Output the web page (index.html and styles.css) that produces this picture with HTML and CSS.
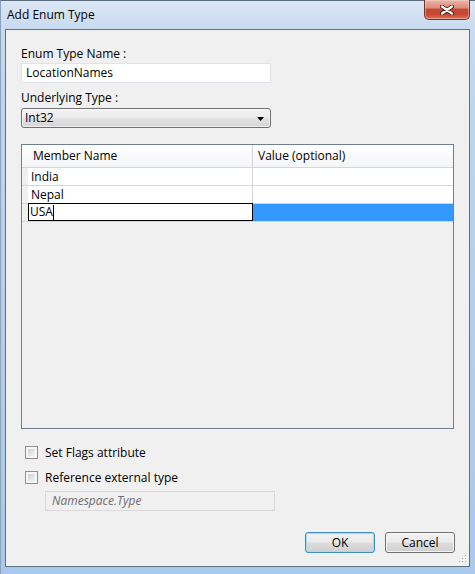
FILE: index.html
```html
<!DOCTYPE html>
<html>
<head>
<meta charset="utf-8">
<title>Add Enum Type</title>
<link rel="stylesheet" href="styles.css">
</head>
<body>
<div class="window">
  <div class="titlebar">
    <span class="title">Add Enum Type</span>
    <div class="close">
      <svg width="14" height="10" viewBox="0 0 14 10">
        <path d="M2 1.5 L12 8.5 M12 1.5 L2 8.5" stroke="#4a1e16" stroke-width="4" stroke-linecap="round" fill="none"/>
        <path d="M2 1.5 L12 8.5 M12 1.5 L2 8.5" stroke="#ffffff" stroke-width="2.2" stroke-linecap="round" fill="none"/>
      </svg>
    </div>
  </div>
  <div class="client">
    <div class="label">Enum Type Name :</div>
    <div class="textbox">LocationNames</div>
    <div class="label label-second">Underlying Type :</div>
    <div class="combo">
      <span>Int32</span>
      <svg class="arrow" width="7" height="4" viewBox="0 0 7 4"><path d="M0 0 H7 L3.5 4 Z" fill="#000"/></svg>
    </div>
    <div class="grid">
      <div class="row header">
        <div class="rowhead"></div>
        <div class="cell c1">Member Name</div>
        <div class="cell c2">Value (optional)</div>
      </div>
      <div class="row">
        <div class="rowhead"></div>
        <div class="cell c1">India</div>
        <div class="cell c2"></div>
      </div>
      <div class="row">
        <div class="rowhead"></div>
        <div class="cell c1">Nepal</div>
        <div class="cell c2"></div>
      </div>
      <div class="row current">
        <div class="rowhead"></div>
        <div class="cell c1 editing">USA<span class="caret"></span></div>
        <div class="cell c2 selected"></div>
      </div>
    </div>
    <div class="check first-check"><span class="box"></span><span>Set Flags attribute</span></div>
    <div class="check second-check"><span class="box"></span><span>Reference external type</span></div>
    <div class="disabled-box">Namespace.Type</div>
    <div class="buttons">
      <div class="btn default">OK</div>
      <div class="btn">Cancel</div>
    </div>
    <svg class="grip" width="10" height="10" viewBox="0 0 10 10">
      <g fill="#ffffff">
        <rect x="9" y="1" width="1" height="1"/><rect x="9" y="4" width="1" height="1"/><rect x="9" y="7" width="1" height="1"/>
        <rect x="6" y="4" width="1" height="1"/><rect x="6" y="7" width="1" height="1"/><rect x="3" y="7" width="1" height="1"/>
      </g>
      <g fill="#a8a8a8">
        <rect x="8" y="0" width="1" height="1"/><rect x="8" y="3" width="1" height="1"/><rect x="8" y="6" width="1" height="1"/>
        <rect x="5" y="3" width="1" height="1"/><rect x="5" y="6" width="1" height="1"/><rect x="2" y="6" width="1" height="1"/>
      </g>
    </svg>
  </div>
</div>
</body>
</html>
```
FILE: styles.css
```css
html, body {
  margin: 0;
  padding: 0;
}
body {
  font-family: "Open Sans", "Noto Sans", sans-serif;
  font-size: 12px;
  color: #1a1a1a;
  background: #b9d1ec;
}
.window {
  width: 475px;
  height: 574px;
  box-sizing: border-box;
  display: flex;
  flex-direction: column;
  border-top: 1px solid #5d6d80;
  border-left: 1px solid #8da3bc;
  background: linear-gradient(180deg, #dce7f4 0px, #c8dbf0 28px, #bcd4ee 120px, #a9c8ea 100%);
}
.titlebar {
  height: 28px;
  display: flex;
  justify-content: space-between;
  align-items: flex-start;
  padding-left: 6px;
}
.title {
  line-height: 28px;
  color: #000;
}
.close {
  width: 46px;
  height: 20px;
  box-sizing: border-box;
  margin-top: -1px;
  margin-right: 5px;
  border: 1px solid #6e3229;
  border-top: none;
  border-radius: 0 0 5px 5px;
  background: linear-gradient(180deg, #eab4a6 0%, #dc8e7b 40%, #c14a36 50%, #c94530 75%, #e0735a 100%);
  box-shadow: inset 0 0 0 1px rgba(255, 220, 210, 0.45);
  display: flex;
  align-items: center;
  justify-content: center;
}
.client {
  position: relative;
  flex: 1;
  margin: 0 5px 7px 4px;
  border: 1px solid #5f7083;
  background: #f0f0f0;
  padding: 16px 14px 0 15px;
  display: flex;
  flex-direction: column;
}
.label {
  line-height: 16px;
  height: 16px;
  color: #000;
}
.label-second {
  margin-top: 7px;
}
.textbox {
  margin-top: 1px;
  width: 250px;
  height: 20px;
  box-sizing: border-box;
  border: 1px solid #e1e3ea;
  background: #fff;
  padding-left: 4px;
  line-height: 18px;
  color: #000;
}
.combo {
  margin-top: 2px;
  width: 250px;
  height: 20px;
  box-sizing: border-box;
  border: 1px solid #707070;
  border-radius: 3px;
  background: linear-gradient(180deg, #f3f3f3 0%, #ececec 45%, #e1e1e1 55%, #d6d6d6 100%);
  box-shadow: inset 0 0 0 1px rgba(255, 255, 255, 0.6);
  padding: 0 6px 0 3px;
  display: flex;
  align-items: center;
  justify-content: space-between;
  line-height: 18px;
  color: #000;
}
.arrow {
  display: block;
  margin-top: 1px;
}
.grid {
  margin-top: 16px;
  width: 433px;
  height: 285px;
  box-sizing: border-box;
  border: 1px solid #6f7f90;
  background: #f0f0f0;
  display: flex;
  flex-direction: column;
}
.row {
  display: flex;
  height: 18px;
  box-sizing: border-box;
  border-bottom: 1px solid #d7d7d7;
  background: #fff;
}
.row.header {
  height: 23px;
  background: linear-gradient(180deg, #ffffff 0%, #f4f5f7 100%);
  border-bottom: 1px solid #d5d5d5;
}
.rowhead {
  width: 6px;
  flex: none;
  background: #f0f0f0;
}
.row.header .rowhead {
  background: transparent;
}
.cell {
  box-sizing: border-box;
  line-height: 17px;
  color: #000;
  white-space: nowrap;
}
.c1 {
  width: 225px;
  border-right: 1px solid #d5d5d5;
  padding-left: 3px;
}
.c2 {
  width: 200px;
  padding-left: 5px;
}
.row.header .cell {
  line-height: 22px;
}
.row.header .c1 {
  padding-left: 5px;
}
.editing {
  border: 1px solid #000;
  margin-top: -1px;
  height: 18px;
  padding-left: 1px;
  line-height: 16px;
  display: flex;
  align-items: center;
}
.caret {
  display: inline-block;
  width: 1px;
  height: 15px;
  background: #000;
}
.selected {
  background: #3399ff;
}
.check {
  display: flex;
  align-items: center;
  gap: 7px;
  height: 18px;
  padding-left: 4px;
  color: #000;
}
.first-check {
  margin-top: 14px;
}
.second-check {
  margin-top: 7px;
}
.box {
  width: 13px;
  height: 13px;
  box-sizing: border-box;
  border: 1px solid #8e8f8f;
  padding: 2px;
  background: #f6f6f6;
  flex: none;
}
.box::after {
  content: "";
  display: block;
  width: 100%;
  height: 100%;
  background: linear-gradient(135deg, #cdd0d5 0%, #e6e7e9 60%, #f4f4f4 100%);
}
.disabled-box {
  margin-top: 5px;
  margin-left: 24px;
  width: 230px;
  height: 20px;
  box-sizing: border-box;
  border: 1px solid #d9d9d9;
  background: #f0f0f0;
  padding-left: 6px;
  line-height: 18px;
  font-style: italic;
  color: #6d6d6d;
}
.buttons {
  margin-top: 21px;
  display: flex;
  justify-content: flex-end;
  gap: 10px;
}
.btn {
  width: 70px;
  height: 21px;
  box-sizing: border-box;
  border: 1px solid #707070;
  border-radius: 3px;
  background: linear-gradient(180deg, #f2f2f2 0%, #ebebeb 48%, #dddddd 52%, #cfcfcf 100%);
  box-shadow: inset 0 0 0 1px rgba(255, 255, 255, 0.75);
  text-align: center;
  line-height: 19px;
  color: #000;
}
.btn.default {
  border-color: #3c8fbf;
  box-shadow: inset 0 0 0 1px #9fdcf6;
}
.grip {
  position: absolute;
  right: 2px;
  bottom: 1px;
}
```
